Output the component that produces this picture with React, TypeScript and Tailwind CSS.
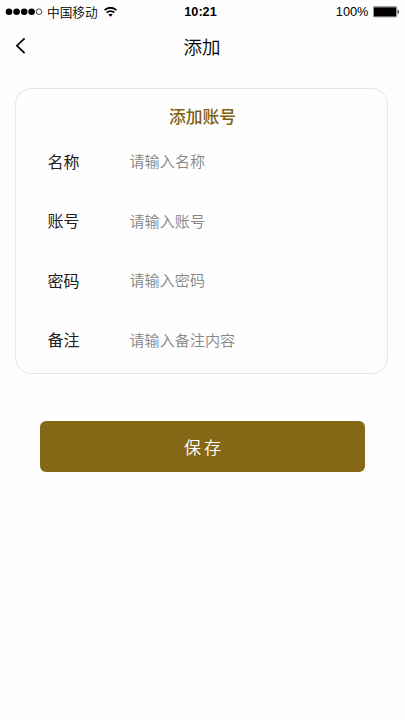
const fields = [
  { label: '名称', hint: '请输入名称' },
  { label: '账号', hint: '请输入账号' },
  { label: '密码', hint: '请输入密码' },
  { label: '备注', hint: '请输入备注内容' },
];

function SignalDots() {
  return (
    <svg className="h-[8px] w-[38px]" viewBox="0 0 38 8">
      <circle cx="4" cy="3.7" r="3.3" />
      <circle cx="11.6" cy="3.7" r="3.3" />
      <circle cx="19.2" cy="3.7" r="3.3" />
      <circle cx="26.6" cy="3.7" r="3.3" />
      <circle cx="34" cy="3.7" r="2.8" fill="none" stroke="#000" strokeWidth="0.7" />
    </svg>
  );
}

function Wifi() {
  return (
    <svg className="h-[10px] w-[13px]" viewBox="0 0 13 10" fill="none" stroke="#000">
      <path d="M0.6 3.2C3.8 -0.1 9.2 -0.1 12.4 3.2" strokeWidth="1.8" />
      <path d="M2.7 5.7C4.8 3.6 8.2 3.6 10.3 5.7" strokeWidth="1.7" />
      <path d="M6.5 9.8L4.3 7.6C5.5 6.5 7.5 6.5 8.7 7.6Z" fill="#000" stroke="none" />
    </svg>
  );
}

function Battery() {
  return (
    <svg className="h-[12px] w-[27px]" viewBox="0 0 27 12">
      <rect x="0.2" y="0.6" width="23.6" height="10.4" rx="1.2" fill="#999" stroke="#777" strokeWidth="0.6" />
      <rect x="1" y="1.4" width="22" height="8.8" rx="0.5" />
      <path d="M24.7 3.8C26.3 4.1 26.3 7.5 24.7 7.8Z" />
    </svg>
  );
}

export default function App() {
  return (
    <div className="flex h-[720px] w-[405px] flex-col bg-[#fefefe] font-['Noto_Sans_CJK_SC',sans-serif] text-black">
      <div className="grid h-6 grid-cols-[1fr_auto_1fr] items-center pr-[5px] pl-[5px]">
        <div className="flex items-center">
          <SignalDots />
          <span className="ml-1 text-[12.7px] leading-6 font-[350]">中国移动</span>
          <span className="ml-[6px]"><Wifi /></span>
        </div>
        <span className="mr-[4px] font-['Liberation_Sans',sans-serif] text-[12.7px] leading-6 font-bold">10:21</span>
        <div className="flex items-center justify-end">
          <span className="mr-[4.5px] font-['Liberation_Sans',sans-serif] text-[12.8px] leading-6">100%</span>
          <Battery />
        </div>
      </div>

      <header className="grid h-11 grid-cols-[1fr_auto_1fr] items-center px-[15px]">
        <svg className="h-[18px] w-[11px]" viewBox="0 0 11 18" fill="none" stroke="#000" strokeWidth="1.7">
          <path d="M9.6 1.3L1.9 8.7L9.6 16.1" />
        </svg>
        <h1 className="mr-px text-[18.5px] leading-[43px] font-[350]">添加</h1>
      </header>

      <main className="flex flex-col px-[15px] pt-5">
        <section className="h-[286px] w-[373px] rounded-[16px] border border-[#e6e6e6] pt-[11px]">
          <h2 className="mb-[-1px] pl-[2px] text-center text-[16.8px] leading-8 font-medium text-[#80600f]">添加账号</h2>
          {fields.map((field) => (
            <div key={field.label} className="flex h-[59.5px] items-center pl-[31.5px]">
              <span className="w-[82px] text-[16px] text-[#202020]">{field.label}</span>
              <span className="text-[15.1px] font-[350] text-[#868686]">{field.hint}</span>
            </div>
          ))}
        </section>
        <button className="mx-[25px] mt-[47px] h-[51px] rounded-[6px] bg-[#866716] text-[17px] font-[350] text-white">
          <span className="mr-[-3px] tracking-[3px]">保存</span>
        </button>
      </main>
    </div>
  );
}
